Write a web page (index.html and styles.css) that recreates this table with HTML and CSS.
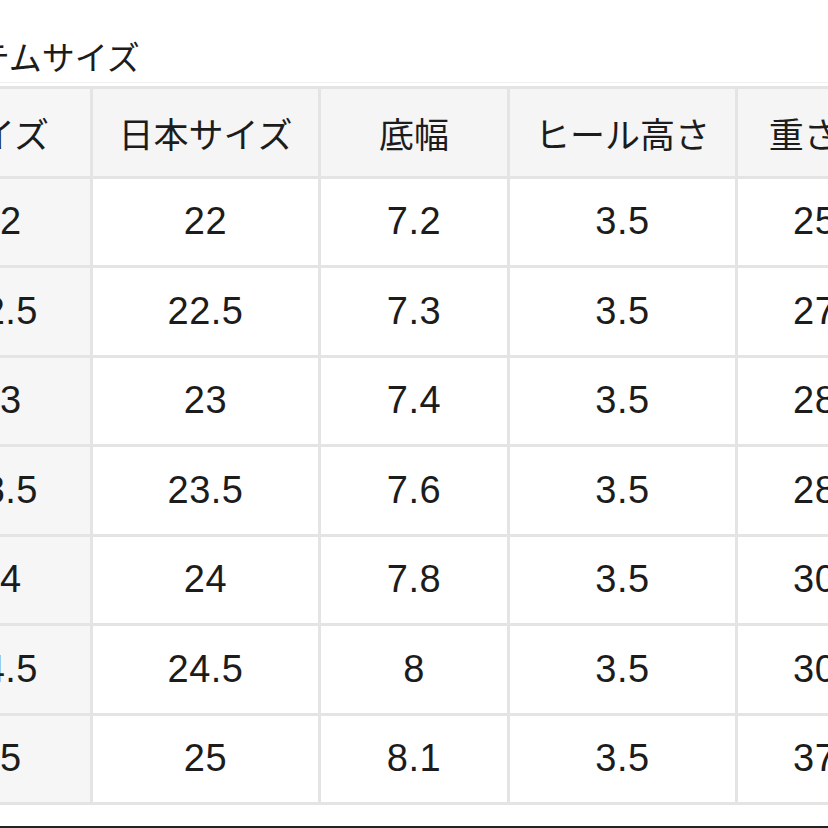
FILE: index.html
```html
<!DOCTYPE html>
<html lang="ja">
<head>
<meta charset="utf-8">
<title>アイテムサイズ</title>
<link rel="stylesheet" href="styles.css">
</head>
<body>
<div class="page">
  <h2 class="title">アイテムサイズ</h2>
  <div class="faint-rule"></div>
  <div class="size-grid">
    <div class="cell head side">サイズ</div>
    <div class="cell head">日本サイズ</div>
    <div class="cell head">底幅</div>
    <div class="cell head">ヒール高さ</div>
    <div class="cell head">重さ(g)</div>

    <div class="cell side num">22</div><div class="cell num">22</div><div class="cell num">7.2</div><div class="cell num">3.5</div><div class="cell num">250</div>
    <div class="cell side num">22.5</div><div class="cell num">22.5</div><div class="cell num">7.3</div><div class="cell num">3.5</div><div class="cell num">270</div>
    <div class="cell side num">23</div><div class="cell num">23</div><div class="cell num">7.4</div><div class="cell num">3.5</div><div class="cell num">280</div>
    <div class="cell side num">23.5</div><div class="cell num">23.5</div><div class="cell num">7.6</div><div class="cell num">3.5</div><div class="cell num">285</div>
    <div class="cell side num">24</div><div class="cell num">24</div><div class="cell num">7.8</div><div class="cell num">3.5</div><div class="cell num">300</div>
    <div class="cell side num">24.5</div><div class="cell num">24.5</div><div class="cell num">8</div><div class="cell num">3.5</div><div class="cell num">305</div>
    <div class="cell side num">25</div><div class="cell num">25</div><div class="cell num">8.1</div><div class="cell num">3.5</div><div class="cell num">370</div>
  </div>
  <div class="bottom-rule"></div>
</div>
</body>
</html>
```
FILE: styles.css
```css
html, body {
  margin: 0;
  padding: 0;
  background: #ffffff;
}
body {
  width: 828px;
  height: 828px;
  overflow: hidden;
  font-family: "Liberation Sans", "Noto Sans CJK JP", sans-serif;
  color: #1c1c1c;
}
.page {
  display: flex;
  flex-direction: column;
}
.title {
  margin: 0 0 9px -87px;
  padding-top: 40px;
  height: 33px;
  font-family: "Noto Sans CJK JP", sans-serif;
  font-weight: 400;
  font-size: 33px;
  line-height: 33px;
  white-space: nowrap;
}
.faint-rule {
  height: 0;
  border-top: 1px solid #f1f1f1;
  margin-bottom: 3px;
}
.size-grid {
  display: grid;
  grid-template-columns: 186px 225px 186px 225px 175px;
  grid-auto-rows: 86.5px;
  gap: 3px;
  padding: 3px;
  margin-left: -99px;
  width: max-content;
  background: #e4e4e4;
}
.cell {
  display: flex;
  align-items: center;
  justify-content: center;
  background: #ffffff;
  white-space: nowrap;
}
.head {
  background: #f5f5f5;
  font-family: "Noto Sans CJK JP", sans-serif;
  font-size: 35px;
}
.side {
  background: #f6f6f6;
}
.side.num {
  padding-left: 6px;
}
.num {
  font-size: 38px;
  letter-spacing: 0.5px;
}
.bottom-rule {
  margin-top: 21px;
  height: 0;
  border-top: 2px solid #222222;
}
```
